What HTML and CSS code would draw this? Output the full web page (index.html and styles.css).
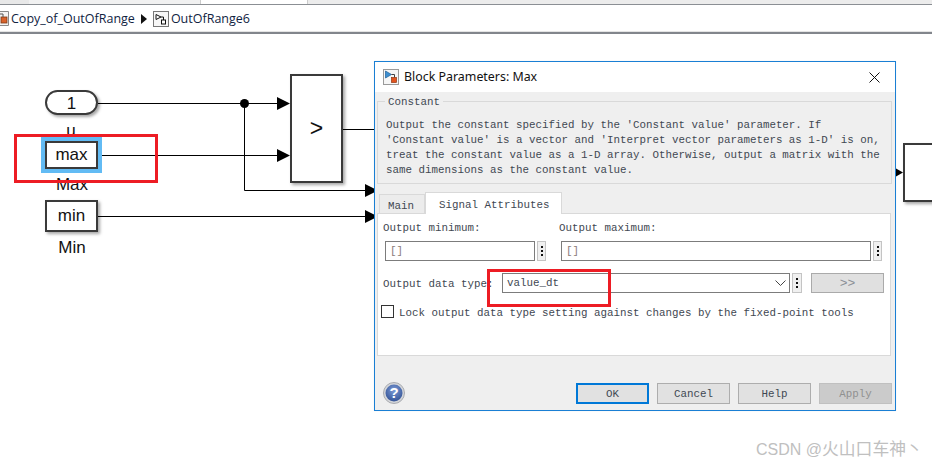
FILE: index.html
```html
<!DOCTYPE html>
<html lang="en">
<head>
<meta charset="utf-8">
<title>Block Parameters: Max</title>
<link rel="stylesheet" href="styles.css">
</head>
<body>
<div class="page">
  <div class="tabstrip">
    <div class="strip-tab strip-a"><span class="strip-mark"></span></div>
    <div class="strip-tab strip-b"></div>
    <div class="strip-tab strip-c"></div>
    <div class="strip-tab strip-d"></div>
  </div>
  <div class="crumbs">
    <svg class="crumb-cut" width="9" height="15" viewBox="0 0 9 15"><path d="M0 .5h8.500v14H0" fill="#f4f4f4" stroke="#8a8a8a"/><rect x="1" y="6" width="6" height="6" fill="#d9622b" stroke="#7a3a18" stroke-width=".8"/><path d="M0 3h3v3" fill="none" stroke="#555"/></svg>
    <span class="crumb">Copy_of_OutOfRange</span>
    <svg class="crumb-sep" width="6" height="10" viewBox="0 0 6 10"><path d="M0 0l6 5-6 5z" fill="#111"/></svg>
    <svg class="crumb-icon" width="16" height="16" viewBox="0 0 16 16"><rect x=".5" y=".5" width="15" height="15" fill="#f7f7f7" stroke="#777"/><path d="M3 3.500l5 2.500-5 2.500z" fill="#fff" stroke="#111"/><path d="M8 6h2.500v3" fill="none" stroke="#111"/><rect x="8.500" y="9" width="4" height="4" fill="#fff" stroke="#111"/></svg>
    <span class="crumb">OutOfRange6</span>
  </div>
  <div class="canvas">
    <svg class="wires" width="932" height="429" viewBox="0 0 932 429">
      <g fill="none" stroke="#000" stroke-width="1">
        <path d="M98 69.500H278"/>
        <path d="M98 121.500H278"/>
        <path d="M244.500 69.500V156.500H366"/>
        <path d="M98 182.500H366"/>
        <path d="M343 95.500H376"/>
      </g>
      <circle cx="244.500" cy="69.500" r="4.500" fill="#000"/>
      <path d="M277 63l13 6.500-13 6.500zM277 115l13 6.500-13 6.500zM365 150l13 6.500-13 6.500zM365 176l13 6.500-13 6.500zM896 134.500l7 4-7 4z" fill="#000"/>
    </svg>

    <div class="block-label label-u">u</div>
    <div class="block const-one">1</div>
    <div class="block-label label-max">Max</div>
    <div class="block const-max">max</div>
    <div class="block const-min">min</div>
    <div class="block-label label-min">Min</div>
    <div class="block compare">&gt;</div>
    <div class="block outer-block"></div>

    <section class="dialog">
      <header class="titlebar">
        <svg class="title-icon" width="16" height="16" viewBox="0 0 16 16"><rect x=".5" y=".5" width="15" height="15" fill="#f6f6f6" stroke="#9a9a9a"/><path d="M2.500 2l6 3.500-6 3.500z" fill="#3d8fd0" stroke="#1e5f98" stroke-width=".7"/><path d="M8.500 5.500h3v3" fill="none" stroke="#444"/><rect x="8.500" y="8.500" width="5" height="5" fill="#e2531e" stroke="#8f3612" stroke-width=".7"/></svg>
        <span class="title-text">Block Parameters: Max</span>
        <svg class="close-x" width="11" height="11" viewBox="0 0 11 11"><path d="M.5.500l10 10M10.500.500l-10 10" fill="none" stroke="#111" stroke-width="1"/></svg>
      </header>
      <div class="dialog-body">
        <fieldset class="desc">
          <legend class="desc-legend">Constant</legend>
          <p class="desc-text">Output the constant specified by the 'Constant value' parameter. If
'Constant value' is a vector and 'Interpret vector parameters as 1-D' is on,
treat the constant value as a 1-D array. Otherwise, output a matrix with the
same dimensions as the constant value.</p>
        </fieldset>

        <div class="tabs">
          <div class="tab">Main</div>
          <div class="tab tab-active">Signal Attributes</div>
        </div>
        <div class="panel">
          <div class="range-grid">
            <div class="range-col">
              <div class="field-label">Output minimum:</div>
              <div class="field-row">
                <div class="input input-min">[]</div>
                <div class="dots"><i></i><i></i><i></i></div>
              </div>
            </div>
            <div class="range-col">
              <div class="field-label">Output maximum:</div>
              <div class="field-row">
                <div class="input input-max">[]</div>
                <div class="dots"><i></i><i></i><i></i></div>
              </div>
            </div>
          </div>
          <div class="type-row">
            <div class="type-label">Output data type:</div>
            <div class="input combo"><span>value_dt</span><svg width="11" height="6" viewBox="0 0 11 6"><path d="M.5.500l5 5 5-5" fill="none" stroke="#444"/></svg></div>
            <div class="dots dots-wide"><i></i><i></i><i></i></div>
            <div class="assist">&gt;&gt;</div>
          </div>
          <div class="lock-row">
            <span class="checkbox"></span>
            <span class="lock-text">Lock output data type setting against changes by the fixed-point tools</span>
          </div>
        </div>
        <footer class="dialog-footer">
          <svg class="help" width="22" height="22" viewBox="0 0 22 22">
            <defs>
              <radialGradient id="helpBlue" cx="50%" cy="35%" r="70%"><stop offset="0" stop-color="#7d9bd6"/><stop offset="1" stop-color="#2f4f92"/></radialGradient>
            </defs>
            <circle cx="11" cy="11" r="10.500" fill="#d4d6da" stroke="#a9abb0"/>
            <circle cx="11" cy="11" r="8.500" fill="url(#helpBlue)"/>
            <text x="11" y="16" text-anchor="middle" class="help-mark">?</text>
          </svg>
          <div class="buttons">
            <div class="btn btn-ok">OK</div>
            <div class="btn">Cancel</div>
            <div class="btn">Help</div>
            <div class="btn btn-off">Apply</div>
          </div>
        </footer>
      </div>
    </section>

    <div class="mark mark-max"></div>
    <div class="mark mark-type"></div>
    <div class="watermark">CSDN @<span class="watermark-cjk">火山口车神丶</span></div>
  </div>
</div>
</body>
</html>
```
FILE: styles.css
```css
* { box-sizing: border-box; }
html, body { margin: 0; padding: 0; background: #fff; }
.page { width: 932px; height: 464px; overflow: hidden; display: flex; flex-direction: column; background: #fff; }

.tabstrip { display: flex; height: 5px; border-bottom: 1px solid #8b8f94; flex: none; }
.strip-tab { height: 4px; }
.strip-a { width: 29px; background: #e8e8e8; display: flex; justify-content: flex-end; }
.strip-mark { width: 10px; background: #35608f; margin-right: -10px; }
.strip-b { width: 171px; background: #f1f1f1; margin-left: 0; }
.strip-c { width: 108px; background: #fff; border-left: 1px solid #ccc; border-right: 1px solid #ccc; }
.strip-d { flex: 1; background: #ececec; }

.crumbs { display: flex; align-items: center; height: 27px; flex: none; background: #fff; border-bottom: 1px solid #e4e4e4; padding-top: 1px; }
.crumb-cut { margin-right: 2px; }
.crumb { font: 12.5px/18px "Open Sans", "Noto Sans", sans-serif; color: #10233f; white-space: nowrap; }
.crumb-sep { margin: 0 6px 0 6px; }
.crumb-icon { margin-right: 2px; }

.canvas { position: relative; flex: 1; border-top: 2px solid #82868c; background: #fff; }
.wires { position: absolute; left: 0; top: 0; }

.block { position: absolute; display: flex; align-items: center; justify-content: center; background: #fff; border: 2px solid #3a3a3a; box-shadow: 2px 2px 3px rgba(0,0,0,.35); font: 17px/1 "Liberation Sans", Arial, sans-serif; color: #111; }
.block-label { position: absolute; width: 60px; text-align: center; font: 17px/20px "Liberation Sans", Arial, sans-serif; color: #111; }
.const-one { left: 45px; top: 56px; width: 53px; height: 25px; border-radius: 13px; padding-top: 2px; }
.const-max { left: 45px; top: 107px; width: 53px; height: 28px; padding-bottom: 2px; box-shadow: 0 0 0 4px #62bbf4; }
.const-min { left: 45px; top: 166px; width: 53px; height: 32px; padding-bottom: 2px; }
.compare { left: 290px; top: 40px; width: 53px; height: 109px; font-size: 23px; }
.outer-block { left: 903px; top: 109px; width: 40px; height: 59px; }
.label-u { left: 41px; top: 87px; }
.label-max { left: 42px; top: 141px; }
.label-min { left: 42px; top: 204px; }

.dialog { position: absolute; left: 374px; top: 27px; width: 522px; height: 350px; border: 1px solid #1a7fd4; background: #efefef; display: flex; flex-direction: column; box-shadow: 0 0 1px rgba(0,0,0,.1); }
.titlebar { height: 30px; flex: none; background: #fff; display: flex; align-items: center; padding: 0 15px 0 8px; }
.title-icon { margin-right: 5px; }
.title-text { flex: 1; font: 12.4px/18px "Noto Sans", sans-serif; color: #111; }

.dialog-body { flex: 1; display: flex; flex-direction: column; padding: 9px 3px 0 2px; font: 10.83px/15px "Liberation Mono", monospace; color: #3f4852; }
.desc { margin: 0; padding: 16px 8px 6px 8px; height: 83px; border: 1px solid #d9d9d9; min-width: 0; }
.desc-legend { padding: 0 3px; margin-left: -1px; line-height: 3px; height: 1px; }
.desc-text { margin: 0; white-space: pre; }

.tabs { display: flex; align-items: flex-end; height: 21px; margin: 8px 0 0 2px; position: relative; z-index: 1; }
.tab { width: 46px; height: 19px; padding-left: 8px; line-height: 22px; border: 1px solid #d9d9d9; border-bottom: 0; background: #ececec; }
.tab-active { width: 137px; height: 22px; margin-bottom: -1px; padding-left: 13px; line-height: 25px; background: #fff; }

.panel { width: 514px; height: 143px; background: #fff; border: 1px solid #d9d9d9; padding: 6px 0 0 5px; display: flex; flex-direction: column; }
.range-grid { display: grid; grid-template-columns: 176px 323px; }
.field-label { height: 15px; line-height: 17px; }
.field-row { display: flex; gap: 2px; margin: 6px 0 0 2px; }
.input { height: 20px; border: 1px solid #7c7c7c; background: #fff; padding-left: 4px; line-height: 18px; color: #8a7a78; }
.input-min { width: 150px; }
.input-max { width: 310px; }
.dots { width: 9px; height: 20px; border: 1px solid #c4c4c4; background: #f0f0f0; display: flex; flex-direction: column; align-items: center; justify-content: center; gap: 2px; }
.dots i { width: 2px; height: 2px; background: #111; }
.dots-wide { width: 10px; margin-left: 2px; }

.type-row { display: flex; align-items: center; margin-top: 12px; height: 20px; }
.type-label { width: 119px; padding-top: 2px; }
.combo { width: 288px; display: flex; align-items: center; justify-content: space-between; padding-right: 3px; color: #3f4852; }
.assist { width: 73px; height: 20px; margin-left: 9px; background: #e0e0e0; border: 1px solid #aaa; text-align: center; font-size: 13px; line-height: 20px; color: #8b8f96; }

.lock-row { display: flex; align-items: center; height: 13px; margin: 12px 0 0 -2px; }
.checkbox { width: 13px; height: 13px; border: 1px solid #333; background: #fff; margin-right: 5px; }
.lock-text { margin-top: 4px; }

.dialog-footer { display: flex; align-items: center; justify-content: space-between; padding: 26px 0 0 6px; }
.help-mark { font: bold 15px "Liberation Sans", Arial, sans-serif; fill: #fff; }
.buttons { display: flex; gap: 8px; }
.btn { width: 73px; height: 21px; background: #e1e1e1; border: 1px solid #adadad; text-align: center; line-height: 21px; }
.btn-ok { border: 2px solid #0078d7; line-height: 19px; }
.btn-off { background: #cbcbcb; border-color: #c0c0c0; color: #909090; }

.mark { position: absolute; border: 3px solid #ed1c24; }
.mark-max { left: 14px; top: 100px; width: 144px; height: 49px; }
.mark-type { left: 487px; top: 235px; width: 124px; height: 38px; }

.watermark { position: absolute; left: 756px; top: 403px; font: 16px/22px "Liberation Sans", "Noto Sans CJK SC", sans-serif; color: #c0c0c0; white-space: nowrap; }
.watermark-cjk { font-family: "Noto Sans CJK SC", sans-serif; font-size: 16.8px; }
```
